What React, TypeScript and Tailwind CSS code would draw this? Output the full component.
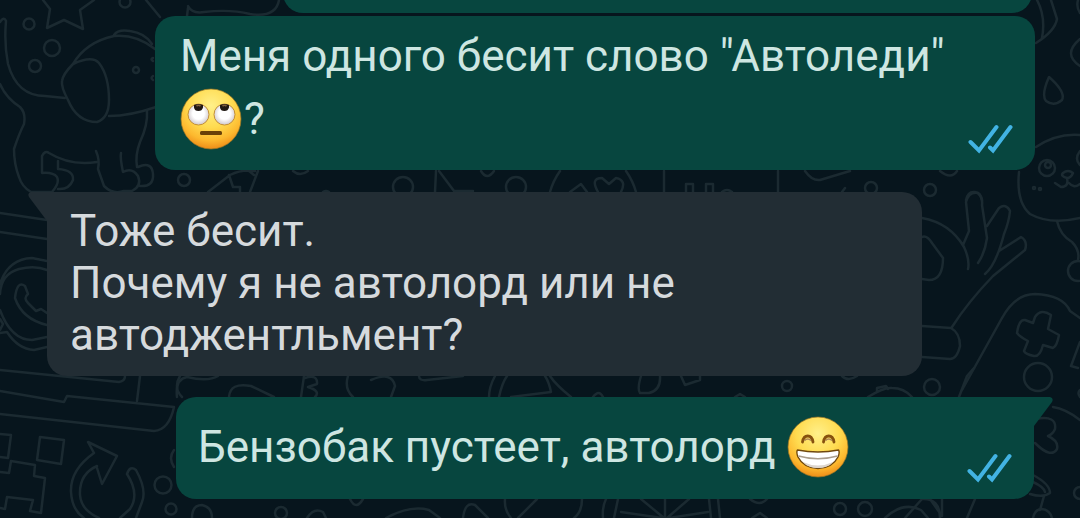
import type { ReactNode } from "react";

function Wallpaper() {
  return (
    <svg
      aria-hidden="true"
      viewBox="0 0 1080 518"
      preserveAspectRatio="xMinYMin slice"
      className="absolute inset-0 h-full w-full"
      fill="none"
      stroke="#1b2a31"
      strokeWidth="2.5"
      strokeLinecap="round"
      strokeLinejoin="round"
    >
      {/* star and bubbles */}
      <path d="M43 0L50 9L47 28L64 20L83 29L80 10L94 0" />
      <circle cx="29" cy="24" r="5.5" />
      <circle cx="52" cy="48" r="8" />
      <circle cx="35" cy="66" r="6" />
      <circle cx="125" cy="2" r="5.5" />
      <path d="M146 0L160 17M188 6Q192 14 204 12Q230 9 250 14Q276 18 279 0M188 8L187 16" />
      {/* elephant */}
      <path d="M0 22Q4 16 6 21Q4 44 8 64Q17 96 45 96L65 98M0 84Q6 98 20 107Q26 113 24 124Q19 134 14 149Q14 164 19 177Q22 187 31 192H52Q60 183 57 177Q53 172 42 173V156Q45 150 49 153Q70 166 97 162" />
      <path d="M73 64Q86 42 114 36Q136 34 155 49M114 35Q118 29 130 31Q145 33 152 44M73 64Q92 55 99 63Q109 76 109 100Q109 118 97 122Q77 122 68 100Q61 87 62 81Q63 74 73 64M109 116Q130 116 156 107" />
      <circle cx="136" cy="70" r="3" />
      <path d="M153 58Q150 59 153 61M153 76Q150 78 153 80M147 111Q148 125 140 142Q135 155 137 167M96 151Q100 160 98 169L104 186Q113 195 124 191H132Q142 186 138 176Q132 167 123 172Q120 158 121 153M138 167Q152 161 153 174Q154 187 140 186M58 161V169Q74 170 73 180Q69 190 58 189" />
      <circle cx="184" cy="180" r="6" />
      <path d="M208 192L230 175Q242 169 255 171M229 175L233 187H240V192M258 171L250 192M249 171L254 175M293 171Q300 177 308 171M323 192Q326 190 329 192" />
      <circle cx="403" cy="187" r="10" />
      <path d="M436 171L435 192M439 171L454 191H473M481 171Q487 181 494 171" />
      <circle cx="516" cy="187" r="10" />
      <path d="M550 192Q553 181 560 171M626 171Q633 181 636 192M570 192L581 184L587 192M598 192Q590 178 602 178L609 184L616 178Q627 180 621 192M664 171V192M778 171V192M686 192V184H693V192M706 192V184H713V192M722 192Q727 188 732 192M805 171Q812 181 820 180L850 171M842 192L845 188" />
      <circle cx="871" cy="188" r="6" />
      <circle cx="930" cy="190" r="6" />
      {/* right side: leaf, drop, face */}
      <path d="M1037 0Q1046 17 1042 38M1051 0L1057 19Q1055 31 1036 43M1078 0Q1076 7 1080 13M1080 39Q1062 54 1080 66M1049 77Q1041 95 1046 101Q1054 107 1062 100Q1066 92 1049 77ZM1036 147Q1057 133 1080 135M1019 172Q1016 202 1030 214Q1050 225 1080 218M940 171Q951 180 957 171M966 200Q968 191 975 192Q981 193 982 200" />
      <circle cx="1047" cy="168" r="8" />
      <circle cx="1048" cy="165" r="3" />
      <path d="M1063 173Q1068 169 1073 173Q1071 178 1067 178Q1060 176 1063 173M1067 178Q1069 187 1061 187L1055 183M1069 183Q1074 189 1080 184M1080 151Q1074 159 1080 165" />
      <circle cx="1034" cy="188" r="1" />
      <circle cx="1040" cy="189" r="1" />
      {/* open hand */}
      <path d="M922 218Q950 223 964 247Q970 260 968 269M963 245L969 231L966 202Q969 191 978 193Q983 198 982 205L987 238Q985 253 978 263M987 226L999 208Q1006 203 1010 211Q1009 222 1004 234Q996 265 985 274M999 251L1021 237Q1028 241 1025 250L993 276Q968 302 952 327M922 237Q927 235 932 243L943 258Q943 280 929 280L922 279M922 326L951 328Q960 333 960 346Q957 359 950 359L922 357" />
      {/* game controller */}
      <path d="M962 390L1002 318Q1015 294 1035 294Q1063 295 1070 311L1080 318M1057 221Q1060 235 1072 242Q1080 250 1078 260" />
      <circle cx="1078" cy="271" r="10" />
      <path d="M1035 317Q1041 308 1051 315L1048 329L1059 335Q1057 346 1053 348L1043 345Q1040 357 1034 356Q1025 354 1024 351L1028 341Q1020 337 1017 333Q1019 319 1025 320L1033 323ZM1080 342L1071 366L1078 368" />
      <circle cx="1038" cy="377" r="14" />
      <circle cx="932" cy="387" r="8" />
      <path d="M959 397L967 376L974 368M1053 407Q1066 409 1080 420M1036 419Q1057 415 1055 429Q1053 434 1048 436Q1059 441 1057 449Q1051 459 1035 443M1033 475Q1050 484 1050 493Q1043 498 1030 494M1033 482Q1044 487 1045 492M1044 496L1040 510M1033 518Q1035 509 1042 509Q1050 510 1052 518M1080 397Q1077 393 1080 390" />
      <circle cx="1080" cy="493" r="6" />
      {/* left side */}
      <path d="M0 213L47 220M0 232L47 239M0 284Q8 259 32 258L47 261M0 310Q11 340 32 340L47 337M0 333L7 332Q18 349 34 350L47 347M0 294Q1 274 19 269Q35 265 47 270M0 319L3 324L0 330M15 298Q17 280 25 286L28 294Q23 298 28 303L36 311L41 309L47 313M15 298Q22 319 47 325M0 370L119 382Q125 381 125 376M0 391L64 402L67 396L174 407Q169 430 154 431L0 414M140 376L137 401M180 376Q173 388 182 397" />
      <path d="M0 434L11 435L8 458L0 457M0 472L9 473L11 461L35 465L34 476L45 478L41 513L30 511L33 500L7 497L5 509L0 508M40 437L64 440L61 464L37 460Z" />
      <path d="M94 453Q70 470 71 492Q72 510 84 518M97 466Q79 474 80 495Q81 510 99 518M94 453L88 442L117 456L102 484L97 468M127 474Q130 465 136 470Q147 490 142 502L136 518M127 474Q140 494 130 509L120 518" />
      <circle cx="163" cy="485" r="8.5" />
      <circle cx="171" cy="509" r="5.5" />
      <path d="M174 450Q168 458 174 467M192 518Q192 505 202 505Q212 507 212 518" />
      {/* row between the lower bubbles */}
      <path d="M177 397Q175 379 187 377Q208 382 218 376M229 397Q230 382 251 386L274 397M304 376L301 397M305 378Q318 374 317 384L308 387Q321 391 315 397M348 376Q344 389 353 397M371 380Q392 371 395 386L391 397M419 376Q419 381 427 380L463 376M489 397Q489 387 495 376M499 397Q502 383 507 376M511 397L551 392Q549 382 545 376M550 376Q556 385 571 397M593 397Q599 389 603 397M641 376Q637 389 640 393H649Q661 390 660 376M681 376L685 385L700 380L700 376M735 397L740 394L745 397M842 376Q848 382 857 376M868 397Q884 387 892 388Q904 388 912 397M877 391V388L886 386L888 389" />
      <circle cx="787" cy="386" r="5" />
      {/* row along the bottom edge */}
      <circle cx="281" cy="513" r="6" />
      <path d="M350 499Q356 511 363 499M307 518Q314 507 323 512L326 518M386 518Q410 505 429 510L440 518M463 518Q465 501 475 505L488 518M505 499Q504 510 511 518M518 518L537 499M582 499Q582 512 574 518M603 518Q602 507 606 499M614 518L618 499M720 518L718 499M711 518L709 499M641 499L664 518M689 499L667 518M665 499V518M621 512L662 518M708 512L669 518M750 499Q760 507 767 499M752 518L760 513L767 518M885 518Q903 501 921 510L928 518M905 518L922 499Q940 498 940 518M975 499L967 518M930 499L942 516V499" />
      <circle cx="840" cy="509" r="6" />
      <circle cx="865" cy="509" r="7" />
    </svg>
  );
}

function RollingEyes() {
  return (
    <svg role="img" aria-label="🙄" viewBox="0 0 62 62" className="size-[62px] shrink-0">
      <defs>
        <radialGradient id="roll-face" cx="50%" cy="28%" r="72%">
          <stop offset="0" stopColor="#fff08a" />
          <stop offset=".5" stopColor="#ffdb50" />
          <stop offset=".8" stopColor="#fdb82e" />
          <stop offset="1" stopColor="#ee8d18" />
        </radialGradient>
        <radialGradient id="roll-eye" cy="45%">
          <stop offset=".55" stopColor="#fff" />
          <stop offset="1" stopColor="#d7d1d5" />
        </radialGradient>
      </defs>
      <circle cx="31" cy="31" r="30" fill="url(#roll-face)" stroke="#9a7424" strokeWidth=".7" />
      <g fill="url(#roll-eye)" stroke="#bd872b" strokeWidth=".9">
        <circle cx="18.5" cy="26.5" r="10.5" />
        <circle cx="44.5" cy="26.5" r="10.5" />
      </g>
      <path d="M14 17Q18.500 15 23 17V19.500Q22 23 18.500 23Q14.500 23 14 19.500ZM40 17Q44.500 15 49 17V19.500Q48 23 44.500 23Q40.500 23 40 19.500Z" fill="#211914" />
      <path d="M16.500 18Q18.500 16.500 20.500 18M42.500 18Q44.500 16.500 46.500 18" fill="none" stroke="#80603e" strokeWidth="1.600" />
      <rect x="20" y="43" width="22" height="4" rx="1.5" fill="#694008" />
    </svg>
  );
}

function BeamingFace() {
  return (
    <svg role="img" aria-label="😁" viewBox="0 0 62 62" className="size-[62px] shrink-0">
      <defs>
        <radialGradient id="beam-face" cx="50%" cy="28%" r="72%">
          <stop offset="0" stopColor="#fff08a" />
          <stop offset=".5" stopColor="#ffdb50" />
          <stop offset=".8" stopColor="#fdb82e" />
          <stop offset="1" stopColor="#ee8d18" />
        </radialGradient>
      </defs>
      <circle cx="31" cy="31" r="30" fill="url(#beam-face)" stroke="#9a7424" strokeWidth=".7" />
      <path d="M15.500 26Q16.500 20 20.700 20Q25 20 26 26M36.500 26Q37.500 20 41.700 20Q46 20 47 26" fill="none" stroke="#87510e" strokeWidth="2.800" strokeLinecap="round" />
      <path d="M17.500 24.500Q20.700 21.500 24 24.500M38.500 24.500Q41.700 21.500 45 24.500" fill="none" stroke="#ad8455" strokeWidth="1.600" />
      <path d="M10.500 34Q31 38 51.500 34Q53 36 51 41Q45.500 52 31 52.500Q16.500 52 11 41Q9 36 10.500 34Z" fill="#fff" stroke="#70480e" strokeWidth="1.400" strokeLinejoin="round" />
      <path d="M11.500 40Q31 45.500 50.500 40" fill="none" stroke="#a99d8d" strokeWidth="1.500" />
      <path d="M16 46Q31 53 46 46Q41 52 31 52Q21 52 16 46Z" fill="#ddd6cf" />
    </svg>
  );
}

function ReadTicks() {
  return (
    <svg
      role="img"
      aria-label="Прочитано"
      viewBox="0 0 46 30"
      className="absolute right-[21px] bottom-4 h-[30px] w-[46px]"
      fill="none"
      stroke="#42b3e3"
      strokeWidth="4"
      strokeLinecap="round"
      strokeLinejoin="miter"
    >
      <path d="M2.500 18L11 26.500L28.500 3M22 23.500L25 26.500L42.500 3" />
    </svg>
  );
}

function Sent({ className, children }: { className: string; children: ReactNode }) {
  return (
    <article className={`relative bg-[#07463f] text-[#cee6e2] ${className}`}>
      {children}
      <ReadTicks />
    </article>
  );
}

export default function App() {
  return (
    <main className="relative min-h-screen overflow-hidden bg-[#07151d] font-['Roboto','Noto_Sans',sans-serif] text-[44px] leading-[52px]">
      <Wallpaper />
      <div className="relative flex flex-col">
        <div className="-mt-10 mr-12 ml-[283px] h-[53px] rounded-[20px] bg-[#07463f]" />

        <Sent className="mt-[3px] mr-[45px] ml-[155px] rounded-[20px] pt-3.5 pr-6 pb-5 pl-[25px]">
          <p>Меня одного бесит слово "Автоледи"</p>
          <p className="mt-1.5 flex items-center gap-0.5">
            <RollingEyes />
            <span>?</span>
          </p>
        </Sent>

        <article className="relative mt-[22px] mr-[158px] ml-[47px] rounded-[20px] rounded-tl-none bg-[#222d34] px-[23px] pt-[13px] pb-[15px] text-[#d6dadd]">
          <svg aria-hidden="true" viewBox="0 0 20 30" className="absolute top-0 -left-[19px] h-[30px] w-5" fill="#222d34">
            <path d="M20 0H3Q-1 1 1 5L19 29H20Z" />
          </svg>
          <p>Тоже бесит.</p>
          <p>
            Почему я не автолорд или не
            <br />
            автоджентльмент?
          </p>
        </article>

        <Sent className="mt-[21px] mr-[46px] ml-44 rounded-[20px] rounded-tr-none pt-[19px] pr-6 pb-[21px] pl-[22px]">
          <svg aria-hidden="true" viewBox="0 0 20 30" className="absolute top-0 -right-[19px] h-[30px] w-5" fill="#07463f">
            <path d="M0 0H17Q21 1 19 5L1 29H0Z" />
          </svg>
          <p className="flex items-center gap-[11px]">
            <span>Бензобак пустеет, автолорд</span>
            <BeamingFace />
          </p>
        </Sent>
      </div>
    </main>
  );
}
